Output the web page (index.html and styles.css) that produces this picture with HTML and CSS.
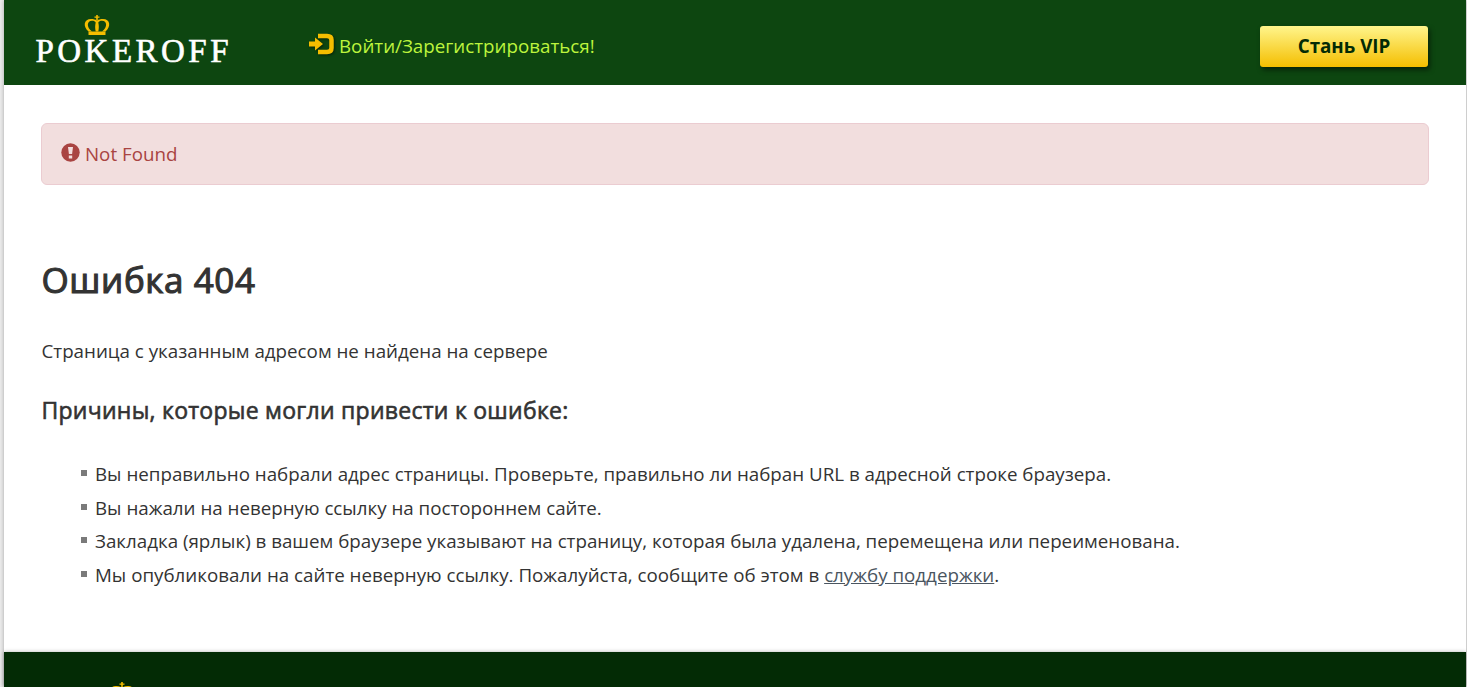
FILE: index.html
```html
<!DOCTYPE html>
<html lang="ru">
<head>
    <meta charset="UTF-8">
    <meta name="viewport" content="width=device-width, initial-scale=1.0">
    <title>Ошибка 404</title>
    <link rel="stylesheet" href="styles.css">
</head>
<body>

    <div class="page">
        <header class="header">
            <a class="logo" href="#">
                <svg width="200" height="60" viewBox="0 0 200 60">
                    <use href="#crown" x="49" y="1"></use>
                    <text class="logo-text" x="0.500" y="47.500" textLength="193">POKEROFF</text>
                </svg>
            </a>
            <a class="login" href="#">
                <svg class="login-icon" width="26" height="22" viewBox="0 0 26 22">
                    <path d="M9 3h9q4.500 0 4.500 4v8q0 4-4.500 4H9" fill="none" stroke="#f5bd00" stroke-width="4.500"/>
                    <path d="M0 8.500h6V4.500l8 6.500-8 6.500v-4H0z" fill="#f5bd00"/>
                </svg>
                <span>Войти/Зарегистрироваться!</span>
            </a>
            <a class="vip-btn" href="#">Стань VIP</a>
        </header>

        <main class="content">
            <div class="alert">
                <svg width="19" height="19" viewBox="0 0 19 19">
                    <circle cx="9.500" cy="9.500" r="9.200" fill="#a94442"/>
                    <path d="M7 4h5l-.9 7H7.900zM7.800 12.500h3.400v2.900H7.800z" fill="#f2dede"/>
                </svg>
                <span>Not Found</span>
            </div>
            <h1>Ошибка 404</h1>
            <p>Страница с указанным адресом не найдена на сервере</p>
            <h3>Причины, которые могли привести к ошибке:</h3>
            <ul class="reasons">
                <li>Вы неправильно набрали адрес страницы. Проверьте, правильно ли набран URL в адресной строке браузера.</li>
                <li>Вы нажали на неверную ссылку на постороннем сайте.</li>
                <li>Закладка (ярлык) в вашем браузере указывают на страницу, которая была удалена, перемещена или переименована.</li>
                <li>Мы опубликовали на сайте неверную ссылку. Пожалуйста, сообщите об этом в <a href="#">службу поддержки</a>.</li>
            </ul>
        </main>

        <footer class="footer">
            <svg width="26" height="21" viewBox="0 0 26 21">
                <g id="crown">
                    <path d="M12.200 0h1.600v1.500h1.700v1.300h-1.700V5h-1.600V2.800h-1.700V1.500h1.700z" fill="#f5bd00"/>
                    <path d="M4.500 16.500C-1.500 11 0 4 7 4c2.500 0 4.500.5 6 1.500C14.500 4.500 16.500 4 19 4c7 0 8.500 7 2.500 12.500h-3.500C24 12 23 5.800 18 5.800c-2 0-3 .5-3.700 1.700.7 3 .7 6 0 9h-2.600c-.7-3-.7-6 0-9C11 6.300 10 5.800 8 5.800 3 5.800 2 12 8 16.500z" fill="#f5bd00"/>
                    <path d="M4.500 16.500h17V20h-17z" fill="#f5bd00"/>
                </g>
            </svg>
        </footer>
    </div>

</body>
</html>
```
FILE: styles.css
```css
body {
    margin: 0;
    background-color: #ebebeb;
    font-family: "Open Sans", "Noto Sans", sans-serif;
    font-size: 18.75px;
    font-weight: 400;
    line-height: 33.6px;
    color: #333;
    overflow: hidden;
}
.page {
    height: 687px;
    margin: 0 1px 0 4px;
    display: flex;
    flex-direction: column;
    background-color: #fff;
    box-shadow: 0 0 4px rgba(0, 0, 0, 0.3);
}
.header {
    height: 85px;
    box-sizing: border-box;
    padding: 0 38px 0 31px;
    display: flex;
    align-items: flex-start;
    background-color: #0d4610;
}
.logo {
    margin-top: 14px;
}
.logo svg {
    display: block;
}
.logo-text {
    font-family: "Liberation Serif", serif;
    font-size: 33px;
    fill: #fff;
    stroke: #fff;
    stroke-width: 0.6px;
}
.login {
    display: flex;
    align-items: center;
    gap: 4px;
    margin: 29px 0 0 74px;
    color: #bdf53d;
    text-decoration: none;
}
.login-icon {
    margin-top: -3px;
    filter: drop-shadow(1px 1px 1px rgba(0, 0, 0, 0.5));
}
.vip-btn {
    width: 168px;
    height: 41px;
    margin: 26px 0 0 auto;
    border-radius: 3px;
    background: linear-gradient(#fff58c, #f4be00);
    box-shadow: 2px 3px 5px rgba(0, 0, 0, 0.5);
    color: #032b05;
    font-weight: 700;
    line-height: 39px;
    text-align: center;
    text-decoration: none;
}
.content {
    flex: 1;
    padding: 38px 37px 0;
}
.alert {
    height: 62px;
    box-sizing: border-box;
    padding: 0 19px;
    display: flex;
    align-items: center;
    gap: 5px;
    border: 1px solid #ebccd1;
    border-radius: 6px;
    background-color: #f2dede;
    color: #a94442;
}
.alert svg {
    margin-top: -3px;
}
h1 {
    margin: 75px 0 34px;
    font-size: 35px;
    font-weight: 400;
    line-height: 40px;
    letter-spacing: 0.6px;
    -webkit-text-stroke: 1.1px #333;
}
p {
    margin: 0;
}
h3 {
    margin: 26px 0 31.4px;
    font-size: 23px;
    font-weight: 400;
    line-height: 32px;
    letter-spacing: 0.26px;
    -webkit-text-stroke: 0.6px #333;
}
h1,
p,
h3 {
    padding-left: 0.5px;
}
.reasons {
    margin: 0;
    padding-left: 40px;
    list-style: none;
}
.reasons li::before {
    content: "";
    display: inline-block;
    width: 6px;
    height: 6px;
    margin-right: 8px;
    vertical-align: 5px;
    background-color: #7a7a7a;
}
.reasons a {
    color: #4a5560;
}
.footer {
    height: 35px;
    box-sizing: border-box;
    padding: 30px 0 0 105px;
    background-color: #032b05;
    box-shadow: 0 0 4px rgba(0, 0, 0, 0.3);
    overflow: hidden;
}
.footer svg {
    display: block;
}
```
